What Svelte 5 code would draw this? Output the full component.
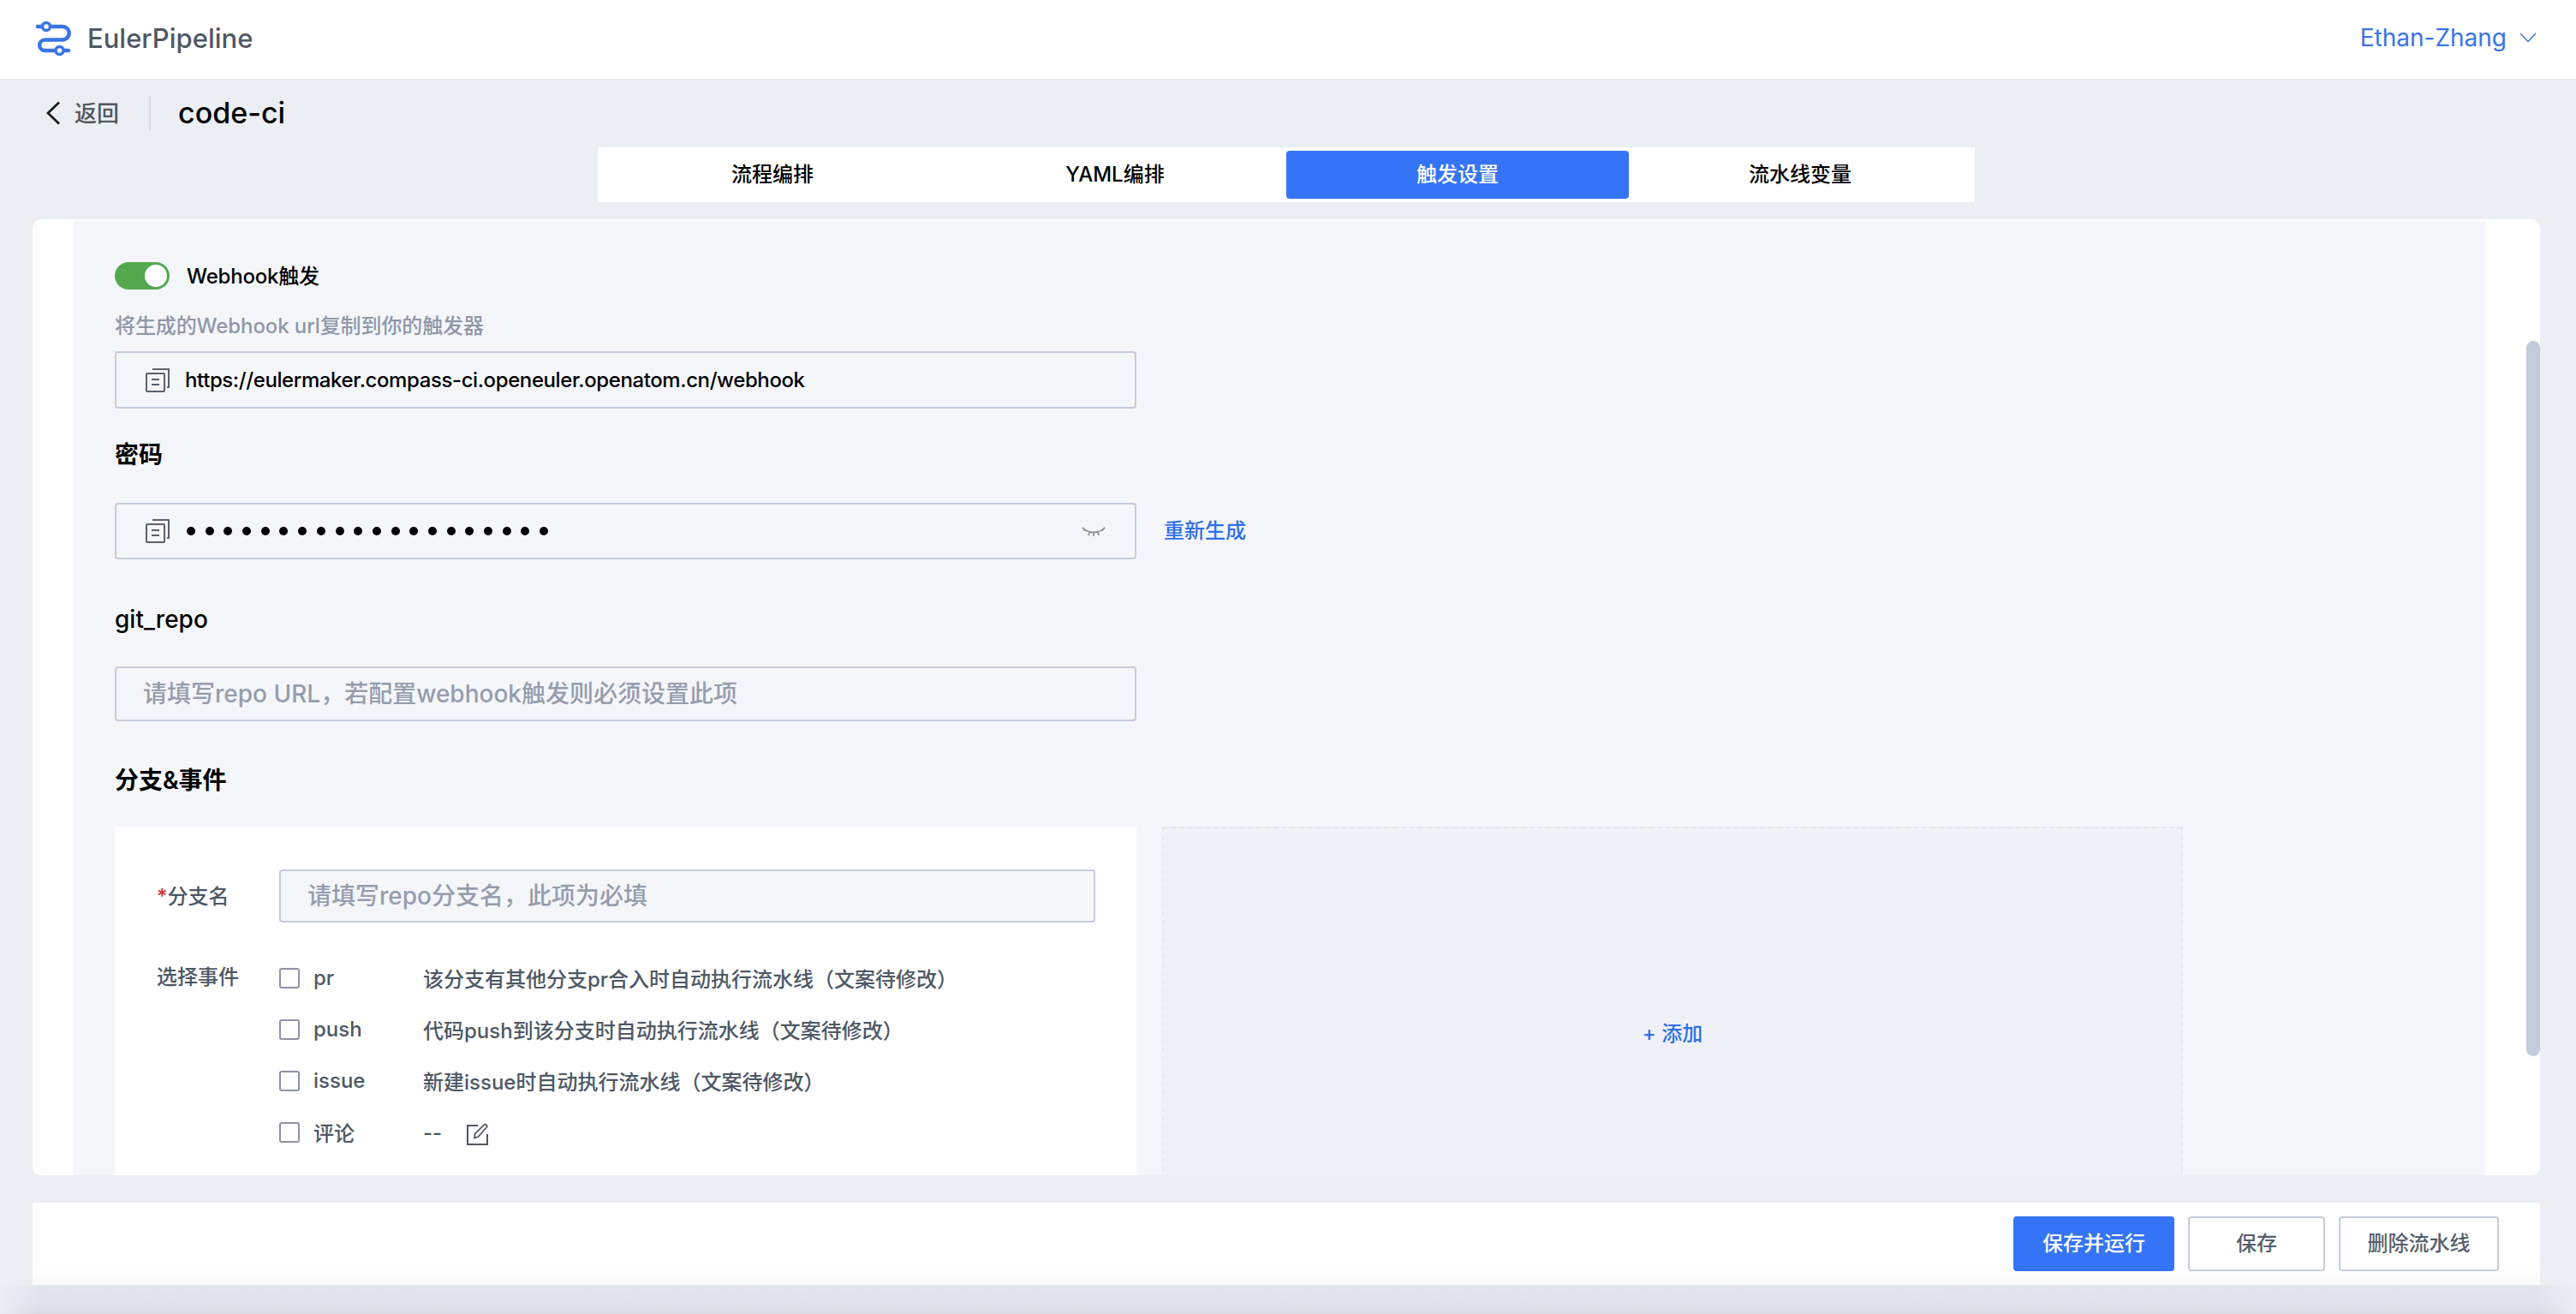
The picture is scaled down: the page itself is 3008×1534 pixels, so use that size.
<script>
  const tabs = ['流程编排', 'YAML编排', '触发设置', '流水线变量'];
  const active = '触发设置';
  const events = [
    { name: 'pr', desc: '该分支有其他分支pr合入时自动执行流水线（文案待修改）' },
    { name: 'push', desc: '代码push到该分支时自动执行流水线（文案待修改）' },
    { name: 'issue', desc: '新建issue时自动执行流水线（文案待修改）' }
  ];
  const dots = Array.from({ length: 20 });
</script>

{#snippet copyIcon()}
  <svg class="copy" viewBox="0 0 28 28" fill="none" stroke="#59616e" stroke-width="2">
    <path d="M8 1h19v21h-2" />
    <rect x="1" y="6" width="21" height="21" rx="1" />
    <path d="M7 13h9M7 19h9" />
  </svg>
{/snippet}

<div class="page">
  <header class="top">
    <div class="brand">
      <svg class="logo" viewBox="0 0 70 60" fill="none">
        <path d="M14 15H43a7.700 7.700 0 0 1 0 15.400H22.500a6.300 6.300 0 0 0 0 12.600H50" stroke="#3a74e6" stroke-width="4.500" stroke-linecap="round" />
        <circle cx="24" cy="15" r="4.500" fill="#fff" stroke="#3a74e6" stroke-width="3.500" />
        <circle cx="39.500" cy="43" r="4.500" fill="#fff" stroke="#3a74e6" stroke-width="3.500" />
      </svg>
      <span class="brand-name">EulerPipeline</span>
    </div>
    <div class="user">
      <span>Ethan-Zhang</span>
      <svg class="caret" viewBox="0 0 20 12" fill="none" stroke="#3a74e6" stroke-width="1.500"><path d="M1 1l9 9.500L19 1" /></svg>
    </div>
  </header>

  <div class="sub">
    <button class="back">
      <svg class="chev" viewBox="0 0 16 28" fill="none" stroke="#1a1d22" stroke-width="2.800"><path d="M15 1.500L2 14l13 12.500" /></svg>
      <span class="up">返回</span>
    </button>
    <span class="sep"></span>
    <h1>code-ci</h1>
  </div>

  <nav class="tabs">
    {#each tabs as t}
      <div class="tab" class:on={t === active}>{t}</div>
    {/each}
  </nav>

  <main class="card">
    <div class="inner">
      <div class="toggle-row">
        <span class="switch"><span class="knob"></span></span>
        <span class="up wh">Webhook触发</span>
      </div>
      <p class="hint">将生成的Webhook url复制到你的触发器</p>
      <div class="field url first">
        {@render copyIcon()}
        <span class="url-text">https://eulermaker.compass-ci.openeuler.openatom.cn/webhook</span>
      </div>

      <h2 class="pw-title">密码</h2>
      <div class="pw-row">
        <div class="field url pw">
          {@render copyIcon()}
          <span class="dots">{#each dots as _}<i></i>{/each}</span>
          <svg class="eye" viewBox="0 0 28 14" fill="none" stroke="#8b8f99" stroke-width="1.800">
            <path d="M1 3c4 4.500 8 5.500 13 5.500S23 7.500 27 3M1 3l3 3.500M27 3l-3 3.500M9 8l-1 4M14 8.500V13M19 8l1 4" />
          </svg>
        </div>
        <span class="link upper">重新生成</span>
      </div>

      <h2 class="git-title">git_repo</h2>
      <div class="field repo"><span class="ph">请填写repo URL，若配置webhook触发则必须设置此项</span></div>

      <h2 class="br-title">分支&amp;事件</h2>
      <div class="panels">
        <section class="left">
          <div class="name-row">
            <label class="lab up"><em>*</em>分支名</label>
            <div class="field branch"><span class="ph">请填写repo分支名，此项为必填</span></div>
          </div>
          <div class="ev">
            <span class="lab ev-lab">选择事件</span>
            <div class="ev-list">
              {#each events as e}
                <div class="ev-row">
                  <span class="box"></span>
                  <span class="ev-name up-s">{e.name}</span>
                  <span class="up-s">{e.desc}</span>
                </div>
              {/each}
              <div class="ev-row">
                <span class="box"></span>
                <span class="ev-name up-s">评论</span>
                <span class="dash">--</span>
                <svg class="edit" viewBox="0 0 26 26" fill="none" stroke="#4f5560" stroke-width="2">
                  <path d="M13 3H1v22h23V13" />
                  <path d="M9 17.500l.8-5L20 2.300a2 2 0 0 1 3 0 2.200 2.200 0 0 1 0 3L13.500 16z" stroke-width="1.700" />
                </svg>
              </div>
            </div>
          </div>
        </section>
        <section class="right"><span class="link up">+ 添加</span></section>
      </div>
    </div>
    <div class="thumb"></div>
  </main>

  <footer class="foot">
    <button class="btn primary">保存并运行</button>
    <button class="btn save">保存</button>
    <button class="btn del">删除流水线</button>
  </footer>
  <div class="shade"></div>
</div>

<style>
  :global(body) {
    margin: 0;
    background: #ebeef3;
  }
  .page {
    width: 3008px;
    height: 1534px;
    overflow: hidden;
    display: flex;
    flex-direction: column;
    font-family: Inter, "Noto Sans CJK SC", sans-serif;
    font-size: 24px;
    color: #000;
    background: #ebeef3;
  }
  .up { padding-bottom: 4px; }
  .upper { padding-bottom: 6px; }
  .up-s { padding-bottom: 2px; }
  .top {
    flex: none;
    height: 92px;
    background: #fff;
    display: flex;
    align-items: center;
    justify-content: space-between;
    padding: 0 46px 4px 30px;
    box-sizing: border-box;
  }
  .brand { display: flex; align-items: center; }
  .logo { width: 70px; height: 60px; margin-top: 4px; }
  .brand-name {
    font-size: 31px;
    font-weight: 500;
    color: #4f5865;
    margin-left: 2px;
  }
  .user {
    display: flex;
    align-items: center;
    gap: 15px;
    color: #3a74e6;
    font-size: 28px;
  }
  .caret { width: 20px; height: 12px; }
  .sub {
    flex: none;
    height: 40px;
    margin-top: 20px;
    display: flex;
    align-items: center;
    padding-left: 54px;
  }
  .back {
    display: flex;
    align-items: center;
    gap: 17px;
    border: 0;
    background: none;
    padding: 0;
    font: inherit;
    font-size: 26px;
    font-weight: 500;
    color: #50585f;
  }
  .chev { width: 16px; height: 28px; }
  .sep { width: 2px; height: 40px; background: #d7dbe3; margin: 0 32px 0 35px; }
  h1 { margin: 0; font-size: 34px; font-weight: 500; line-height: 40px; }
  .tabs {
    flex: none;
    align-self: flex-start;
    margin: 20px 0 0 698px;
    width: 1608px;
    height: 64px;
    padding: 4px;
    box-sizing: border-box;
    background: #fff;
    display: grid;
    grid-template-columns: repeat(4, 1fr);
  }
  .tab {
    display: grid;
    place-items: center;
    border-radius: 4px;
    font-weight: 500;
    padding-bottom: 6px;
  }
  .tab.on { background: #3574f6; color: #fff; }
  .card {
    position: relative;
    flex: none;
    height: 1116px;
    margin: 20px 42px 0 38px;
    background: #fff;
    border-radius: 10px;
    overflow: hidden;
    padding: 2px 64px 0 48px;
    box-sizing: border-box;
  }
  .inner {
    background: #f4f6fa;
    padding: 48px 0 0 48px;
    height: 1300px;
  }
  .thumb {
    position: absolute;
    right: 0;
    top: 142px;
    width: 16px;
    height: 835px;
    border-radius: 8px;
    background: #c3ccdb;
  }
  .toggle-row {
    display: flex;
    align-items: center;
    gap: 20px;
    height: 32px;
  }
  .wh { font-weight: 450; letter-spacing: -0.2px; }
  .switch {
    width: 64px;
    height: 32px;
    border-radius: 16px;
    background: #53a84e;
    position: relative;
  }
  .knob {
    position: absolute;
    right: 3px;
    top: 3px;
    width: 26px;
    height: 26px;
    border-radius: 50%;
    background: #fff;
  }
  .hint {
    margin: 27px 0 0;
    line-height: 32px;
    color: #8f97a8;
    font-weight: 500;
    letter-spacing: -0.1px;
  }
  .field {
    box-sizing: border-box;
    width: 1193px;
    border: 2px solid #c5ccdb;
    border-radius: 4px;
    display: flex;
    align-items: center;
  }
  .url {
    height: 66px;
    margin-top: 14px;
    padding-left: 34px;
    gap: 18px;
  }
  .first { height: 67px; margin-top: 13px; }
  .url-text { letter-spacing: -0.4px; font-weight: 450; }
  .copy { width: 28px; height: 28px; flex: none; }
  h2 {
    margin: 0;
    font-size: 28px;
    line-height: 40px;
    font-weight: 600;
  }
  .pw-title { margin-top: 34px; }
  .pw-row {
    display: flex;
    align-items: center;
    gap: 32px;
    margin-top: 36px;
  }
  .pw { margin-top: 0; position: relative; }
  .dots { display: flex; gap: 11.700px; margin-left: 2px; }
  .dots i {
    width: 10px;
    height: 10px;
    border-radius: 50%;
    background: #000;
  }
  .eye {
    width: 28px;
    height: 14px;
    margin-left: auto;
    margin-right: 34px;
  }
  .link { color: #2e6fe8; font-weight: 500; }
  .git-title { margin-top: 50px; font-weight: 500; padding-bottom: 4px; margin-bottom: -2px; }
  .repo { height: 64px; margin-top: 33px; padding-left: 31px; }
  .ph {
    font-size: 28px;
    color: #959dad;
    padding-bottom: 4px;
    font-weight: 500;
  }
  .br-title { margin-top: 49px; }
  .panels {
    display: flex;
    gap: 30px;
    margin-top: 34px;
  }
  .left, .right {
    height: 482px;
    box-sizing: border-box;
  }
  .left {
    width: 1193px;
    background: #fff;
    padding: 50px 47px 0 49px;
  }
  .right {
    width: 1192px;
    background: #eff1f6;
    border: 2px dashed #e7e9ef;
    display: grid;
    place-items: center;
  }
  .lab { color: #4e5865; font-weight: 500; }
  .lab em { color: #d0342c; font-style: normal; }
  .name-row { display: flex; align-items: center; }
  .name-row .lab { width: 143px; flex: none; box-sizing: border-box; }
  .branch {
    width: 953px;
    height: 62px;
    background: #f4f6fa;
    padding-left: 31px;
  }
  .ev { display: flex; margin-top: 35px; }
  .ev-lab { width: 143px; flex: none; line-height: 58px; }
  .ev-row {
    height: 60px;
    display: flex;
    align-items: center;
    color: #4e5865;
    font-weight: 500;
  }
  .box {
    box-sizing: border-box;
    width: 24px;
    height: 24px;
    border: 2px solid #8c93a5;
    border-radius: 3px;
    flex: none;
    margin-right: 16px;
  }
  .ev-name { width: 128px; flex: none; font-weight: 450; }
  .dash { margin-right: 29px; }
  .edit { width: 26px; height: 26px; margin-top: 4px; }
  .foot {
    flex: none;
    height: 96px;
    margin: 32px 42px 0 38px;
    background: linear-gradient(#fff 70%, #fafbf9);
    display: flex;
    align-items: center;
    justify-content: flex-end;
    padding-right: 48px;
    gap: 16px;
  }
  .btn {
    height: 64px;
    border-radius: 4px;
    box-sizing: border-box;
    font: inherit;
    font-weight: 500;
    color: #555f6c;
    background: #fff;
    border: 2px solid #c8cdde;
    padding: 0 0 6px;
  }
  .primary { width: 188px; background: #3574f6; border-color: #3574f6; color: #fff; }
  .save { width: 160px; }
  .del { width: 187px; }
  .shade {
    flex: none;
    height: 34px;
    background: linear-gradient(#e3e6ee, #e0e2ea 70%, #d8dadf);
    -webkit-mask-image: linear-gradient(90deg, transparent 0, #000 44px, #000 2964px, transparent 100%);
    mask-image: linear-gradient(90deg, transparent 0, #000 44px, #000 2964px, transparent 100%);
  }
</style>
